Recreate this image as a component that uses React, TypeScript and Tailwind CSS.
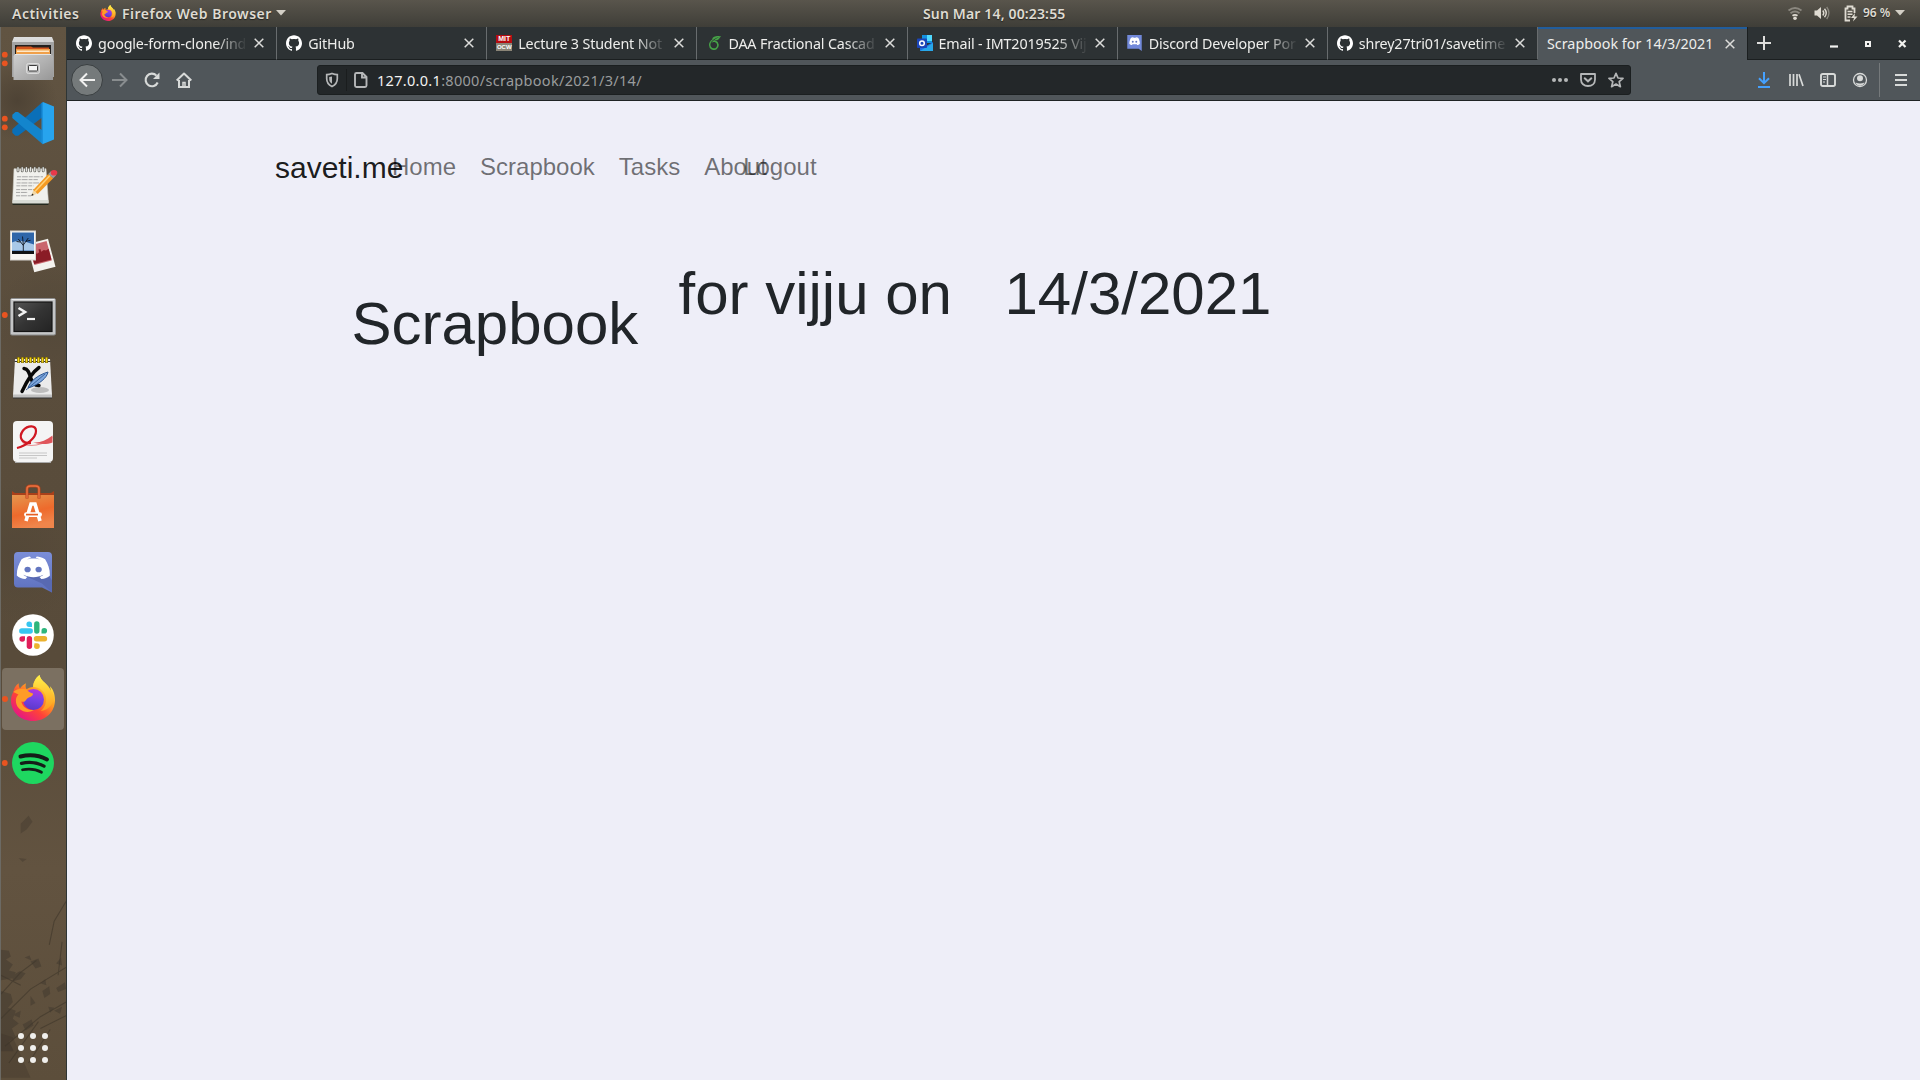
import React, { ReactNode } from "react";
import { SiGithub, SiOverleaf } from "react-icons/si";

const DiscordFace = () => (
  <>
    <path
      fill="#fff"
      d="M19.5 31c0-6 1.500-10.500 4-15 2.500-1.800 5-2.400 7-2.500l.8 1.200c-2 .5-3.600 1.200-5 2.100 4.500-1.900 9.500-1.900 14 0-1.400-.9-3-1.600-5-2.100l.8-1.200c2 .1 4.500.7 7 2.500 2.500 4.500 4 9 4 15-1.800 2.300-4.400 3.100-7.200 3.200l-1.500-1.900c1.300-.4 2.500-1 3.300-2-5.100 3-11.500 3-16.800 0 .8 1 2 1.600 3.300 2l-1.500 1.900c-2.800-.1-5.400-.9-7.200-3.200z"
    />
    <circle cx="28.500" cy="25.500" r="2.600" fill="#6376c0" />
    <circle cx="37.700" cy="25.500" r="2.600" fill="#6376c0" />
  </>
);

/* Launcher and panel share the same Firefox drawing, on a 44 unit canvas. */
const Firefox = ({ id, className }: { id: string; className?: string }) => (
  <svg viewBox="0 0 44 46" className={className}>
    <defs>
      <linearGradient id={id + "a"} x1=".85" y1=".1" x2=".2" y2=".95">
        <stop offset="0" stopColor="#fff44f" />
        <stop offset=".35" stopColor="#ffa020" />
        <stop offset=".65" stopColor="#ff4338" />
        <stop offset="1" stopColor="#e31587" />
      </linearGradient>
      <linearGradient id={id + "b"} x1=".6" y1="0" x2=".4" y2="1">
        <stop offset="0" stopColor="#b833e1" />
        <stop offset=".5" stopColor="#7542e5" />
        <stop offset="1" stopColor="#5b38c9" />
      </linearGradient>
      <linearGradient id={id + "c"} x1="0" y1="0" x2="0" y2="1">
        <stop offset="0" stopColor="#fff14b" />
        <stop offset="1" stopColor="#ff9a1c" />
      </linearGradient>
    </defs>
    <path
      fill={`url(#${id}a)`}
      d="M28.500 0c-4 3-6.500 8-6.300 12-3 .2-5 1-6.700 2.200-1-1.500-1.200-3.600-.5-6-3 1.400-5 3.500-6 5.300-1-1-1.500-3-1.200-5.200C4.500 10.500 2.600 14 2.300 17 .8 19.500 0 22.500 0 25.500 0 37 9.500 46 22 46s22-9 22-21c0-6-2-11-5-13.800.4 1.500.6 2.800.5 4.500C37.500 8.500 30 7 28.500 0z"
    />
    <path
      fill={`url(#${id}c)`}
      d="M28.500 0c-4 3-6.500 8-6.300 12 6 0 11 4 12.500 9 1.500 6-1 12-5 15 8-1 13-7 13-14 0-3-1.200-5-3.200-6.300C37.500 8.500 30 7 28.500 0z"
    />
    <circle cx="22.500" cy="24.500" r="10.500" fill={`url(#${id}b)`} />
    <path
      fill="#ff9c27"
      d="M2.300 17c3-3.200 8-4 13.200-2.800 1.300 2.200 3.200 3.300 6.500 4.300.5 1.500-1.500 3-4.200 4-2 .8-2.600 2.700-3.800 3.800-1.200.8-2.400.6-3.700.2 1.700 6 6.500 9 12.700 8.500-8 5-17-.5-18-7.500-.5-4 .5-6 2.500-8z"
    />
  </svg>
);

const Cell = ({ children }: { children: ReactNode }) => (
  <svg viewBox="0 0 66 64" className="h-16 w-full shrink-0">
    {children}
  </svg>
);

const Dot = ({ y = 32 }: { y?: number }) => <circle cx="4.800" cy={y} r="2.900" fill="#e95420" />;

const Files = () => (
  <Cell>
    <defs>
      <linearGradient id="cab" x1="0" y1="0" x2="1" y2="1">
        <stop offset="0" stopColor="#cfcfcf" />
        <stop offset="1" stopColor="#979797" />
      </linearGradient>
      <linearGradient id="cabTop" x1="0" y1="0" x2="0" y2="1">
        <stop offset="0" stopColor="#dedede" />
        <stop offset="1" stopColor="#a6a6a6" />
      </linearGradient>
    </defs>
    <Dot y={27.700} />
    <Dot y={36.300} />
    <path d="M14 10h38l2 5v35H12V15z" fill="url(#cabTop)" />
    <path d="M12 15h42v35H12z" fill="#a3a3a3" />
    <path d="M15 18h36v11H15z" fill="#23201e" />
    <path d="M17 19.500h14l2 1h16V28H16v-7z" fill="#d2541d" />
    <path d="M16 22h34v6H16z" fill="#f0a04a" />
    <path d="M17 23.500h32v1.500H17z" fill="#fde8c8" />
    <path d="M15 27h36l2 2v24H13.500V29z" fill="url(#cab)" />
    <path d="M15 27.500h36" stroke="#e4e4e4" />
    <rect x="26.500" y="36.500" width="13" height="10" rx="2" fill="#bdbdbd" stroke="#dcdcdc" />
    <rect x="28.500" y="38.500" width="9" height="5.500" rx=".8" fill="#f5f5f5" stroke="#3c3c3c" />
  </Cell>
);

const Code = () => (
  <Cell>
    <Dot y={27.700} />
    <Dot y={36.300} />
    <path d="M42.500 11 12.300 38.300v3.400l3.200 3 2.600.1 25.400-19.400z" fill="#0a6fb8" />
    <path d="M15.500 21l-3.200 2.700v3.200L43 53.500V40L18 21z" fill="#1385cd" />
    <path d="M43 11l11 4.500v33L43 53z" fill="#27a4ee" />
    <path d="M43 11v42l-1.500-1.300V12.300z" fill="#1a8fdb" />
  </Cell>
);

const Notes = () => (
  <Cell>
    <g transform="translate(0 -1.500) scale(1 .95)">
      <path d="M14 16h32l2.500 36H12.500z" fill="#f1f1ed" stroke="#c9c9c3" strokeWidth=".6" />
      <path d="M12.700 49h35.600v4.300H12.700z" fill="#d9dcd6" />
      <path d="M12.500 53.500h36" stroke="#24291f" strokeWidth="1.500" />
      <g stroke="#9d9d9d" strokeWidth=".9" strokeDasharray="4 .8 6 1">
        <path d="M17 24.500h26M16.800 27.500h21M16.600 31h25M16.400 34h17M16.200 38h22M16 41h12M16 44.500h15" />
      </g>
      <g stroke="#55554f" strokeWidth="2.700" strokeLinecap="round">
        <path d="M18 15v3.500M22.200 15v3.500M26.400 15v3.500M30.600 15v3.500M34.800 15v3.500M39 15v3.500M43.200 15v3.500" />
      </g>
      <g stroke="#e6e6e2" strokeWidth="1.400" strokeLinecap="round">
        <path d="M18 15v3.500M22.200 15v3.500M26.400 15v3.500M30.600 15v3.500M34.800 15v3.500M39 15v3.500M43.200 15v3.500" />
      </g>
    </g>
    <g transform="translate(0 -7.500)">
      <path d="M31.300 48.500l2-6 3.700 3.700z" fill="#f1d7a4" />
      <path d="M31.300 48.500l.8-2.600 1.700 1.600z" fill="#222" />
      <path d="M33.200 42.500l15-16 5 4.200-15.500 15.800z" fill="#f59a22" />
      <path d="M35 44l15-16" stroke="#ffd27a" strokeWidth="1.500" />
      <path d="M48.200 26.500l3-3 5 4.200-3 3z" fill="#9c9c9c" />
      <ellipse cx="54" cy="25.300" rx="3.300" ry="2.800" fill="#e8394a" />
    </g>
  </Cell>
);

const Photos = () => (
  <Cell>
    <g transform="rotate(-15 41 36)">
      <rect x="30" y="22" width="22" height="29" fill="#f4f2ee" />
      <rect x="32" y="24" width="18" height="20" fill="#c9666d" />
      <path d="M32 37l3-2v-3h2v2l3-1v-3h2v3l3-1 2 1 3-1v11H32z" fill="#8a1c26" />
    </g>
    <g transform="translate(0 3.500)">
      <rect x="10.500" y="8.500" width="25" height="29" fill="#f7f6f2" stroke="#d6d4cf" />
      <rect x="12" y="10" width="22" height="21.500" fill="#2f66a9" />
      <path d="M12 20c8-4 14 0 22 2v6H12z" fill="#a9c9e8" />
      <path d="M12 28.500h22v3H12z" fill="#101214" />
      <path d="M23.300 29v-6.500M23.300 23l-5-6.500M23.300 22.500l5-7M20.500 19.500l-4-.5M26 18.800l4.500-1M23.300 22l-.8-8" stroke="#0e1520" strokeWidth=".9" fill="none" />
    </g>
  </Cell>
);

const Terminal = () => (
  <Cell>
    <defs>
      <linearGradient id="term" x1="0" y1="0" x2="1" y2="1">
        <stop offset="0" stopColor="#555" />
        <stop offset=".5" stopColor="#343434" />
        <stop offset="1" stopColor="#232323" />
      </linearGradient>
    </defs>
    <Dot />
    <rect x="10.500" y="15.500" width="45" height="36.500" rx="1.500" fill="#c4c5c6" stroke="#8b8c8d" />
    <path d="M11.500 16.500h43" stroke="#ececec" />
    <rect x="14" y="19" width="38" height="29.500" fill="url(#term)" stroke="#151515" strokeWidth="1.200" />
    <path d="M18.500 25l6.500 4-6.500 4" stroke="#f2f2f2" strokeWidth="2.600" fill="none" />
    <path d="M27 36h8" stroke="#f2f2f2" strokeWidth="2.200" />
  </Cell>
);

const Xournal = () => (
  <Cell>
    <path d="M15 12h35l2 36.500H13z" fill="#ebebeb" />
    <path d="M13 47.500h39v3.500H13z" fill="#c0c0c0" />
    <path d="M13 51h39" stroke="#333" />
    <ellipse cx="40" cy="43" rx="9" ry="3" fill="#bdbdbd" />
    <path d="M14.500 14.500h36" stroke="#333" strokeWidth="1.200" />
    <g stroke="#6f5d00" strokeWidth="2.800"><path d="M18.500 10v6M22.500 10v6M26.500 10v6M30.500 10v6M34.500 10v6M38.500 10v6M42.500 10v6M46.500 10v6" /></g>
    <g stroke="#f3d51b" strokeWidth="1.600"><path d="M18.500 10.500v5M22.500 10.500v5M26.500 10.500v5M30.500 10.500v5M34.500 10.500v5M38.500 10.500v5M42.500 10.500v5M46.500 10.500v5" /></g>
    <path d="M24 21.500c4 .5 5 4 7 10 1.500 4.500 3 7 8 7M39 20.500c-7 5-12 13-17 24" stroke="#080808" strokeWidth="3.400" fill="none" strokeLinecap="round" />
    <path d="M28 41c2-7 10-13 20-16-1 6-9 12-17 15z" fill="#7ea7dc" stroke="#2d5793" />
    <path d="M26 43l19-16" stroke="#315b97" strokeWidth=".9" />
  </Cell>
);

const Pdf = () => (
  <Cell>
    <g transform="translate(0 -1.500)">
      <rect x="13" y="11.500" width="40" height="41" rx="4" fill="#f4f4f4" />
      <path d="M15 53h36" stroke="#a9a9a9" />
      <path d="M17 38.500c9-2 19-10 19-17 0-6-8-6-13-.5-5 7-1 15 8 15 8 0 15-3 21.500-8" fill="none" stroke="#e88d90" strokeWidth="1.200" />
      <path d="M31 32.500c7 2 14-1 21.500-6.500v7c-8 3-15 1-21.500-.500z" fill="#e0565b" />
      <path d="M17 38.500c9-2 19-10 19-17 0-6-8-6-13-.5-5 7-1 13 8 12.500" fill="none" stroke="#d01822" strokeWidth="2.200" />
      <path d="M19 43.500h28M19 46h28M19 48.500h18" stroke="#c6c6c6" />
    </g>
  </Cell>
);

const Software = () => (
  <Cell>
    <defs>
      <linearGradient id="bag" x1="0" y1="0" x2=".3" y2="1">
        <stop offset="0" stopColor="#e4974f" />
        <stop offset=".6" stopColor="#ee6a2c" />
        <stop offset="1" stopColor="#f0854b" />
      </linearGradient>
    </defs>
    <g transform="translate(0 2)">
      <path d="M12 14l3 2h36l3-2v8H12z" fill="#a9401a" />
      <path d="M12 18h42v33H12z" fill="url(#bag)" />
      <path d="M27 21.500V12c0-2.500 1.500-3 3.500-3h5c2 0 3.500.5 3.500 3v9.500" fill="none" stroke="#b8441a" strokeWidth="3" />
      <path d="M27 21V12c0-2.500 1.500-3 3.500-3h5c2 0 3.500.5 3.500 3v9" fill="none" stroke="#ea7242" strokeWidth="1.500" />
      <path d="M26 44l5-17h4l5 17" fill="none" stroke="#fff" strokeWidth="3.600" />
      <rect x="24" y="35.300" width="18" height="4.600" rx="2.300" fill="#fff" />
      <path d="M26 37.600h12" stroke="#e65f24" strokeWidth="1.700" />
    </g>
  </Cell>
);

const Discord = () => (
  <Cell>
    <defs>
      <linearGradient id="disc" x1="0" y1="0" x2="0" y2="1">
        <stop offset="0" stopColor="#7b8ed8" />
        <stop offset="1" stopColor="#5d70be" />
      </linearGradient>
    </defs>
    <g transform="translate(0 3.500)">
      <path d="M18 9.500h30a4 4 0 0 1 4 4V50l-10-5H18a4 4 0 0 1-4-4V13.500a4 4 0 0 1 4-4z" fill="url(#disc)" />
      <path d="M48 32l4 6v12l-10-9-20-9z" fill="#5869b2" />
      <g transform="translate(-6.600 -.5) scale(1.200 1.080)"><DiscordFace /></g>
    </g>
  </Cell>
);

const Slack = () => (
  <Cell>
    <circle cx="33" cy="32" r="20.800" fill="#fff" />
    <g transform="translate(0 -.5)">
      <g strokeWidth="5.400" strokeLinecap="round">
        <path d="M21.800 28.500h8.400" stroke="#36c5f0" />
        <path d="M36.800 21.500v7" stroke="#2eb67d" />
        <path d="M36.500 36.300h8" stroke="#ecb22e" />
        <path d="M29.400 36.200v7.600" stroke="#e01e5a" />
      </g>
      <path d="M32 24.500h-2.700a2.800 2.800 0 1 1 2.700-2.800z" fill="#36c5f0" />
      <path d="M41.500 31v-2.600a2.800 2.800 0 1 1 2.700 2.600z" fill="#2eb67d" />
      <path d="M34.500 40.700h2.300a2.900 2.900 0 1 1-2.800 3z" fill="#ecb22e" />
      <path d="M25 33.700v2.600a2.800 2.800 0 1 1-2.700-2.600z" fill="#e01e5a" />
    </g>
  </Cell>
);

const Spotify = () => (
  <Cell>
    <Dot />
    <circle cx="33" cy="32" r="21" fill="#1ed760" />
    <g stroke="#151c18" fill="none" strokeLinecap="round">
      <path d="M20.500 25.500c9-2.200 18.500-1.300 26.500 2.900" strokeWidth="4" />
      <path d="M21.500 32.300c8-1.800 15.500-1 22.500 2.800" strokeWidth="3.300" />
      <path d="M22.500 38.800c6.500-1.300 13-.8 19 2.500" strokeWidth="2.700" />
    </g>
  </Cell>
);

const Foliage = () => (
  <svg viewBox="0 0 66 300" className="absolute bottom-0 left-0 h-[300px] w-full blur-[0.7px]">
    <g fill="none" stroke="#3d3529" strokeWidth="1.100" opacity=".6">
      <path d="M0 215l20-22 16-12M0 240l30-30 36-22M4 268l36-30 28-16M0 196l20 10M8 285l30-42M40 250l26-13M49 165l5-24 12-20M58 196l4-34M28 285l22-34" />
    </g>
    <g fill="#3f382d" opacity=".5">
      <path d="M0 170l8 1 2 6-5 3 7 5-4 6 7 2-3 6-12 2zM12 196l7-4 6 2-5 6-8 2zM30 182l8-3 3 8-6 2zM24 178l5-2 2 5zM0 212l10 3 2 8-5 6 8 3-3 8 6 5-7 5 4 9-7 4 5 10H0zM42 212l7-5 1 8-6 4zM30 217l5 7-5 3zM56 209l9-6 1 7-8 3zM22 246l9-5 2 6-8 5zM54 232l8-4-2 7zM56 184l5-6 1 8zM48 228l6 1-4 5zM40 204l5-4 1 6zM12 236l8-4-1 7z" />
    </g>
    <path d="M0 255l12 4 8 18 10 23H0z" fill="#3a3328" opacity=".3" />
    <path d="M20 42l8-8 4 6-6 8-6 4zM18 77l8 1-4 3z" fill="#463c2f" opacity=".5" />
  </svg>
);

const Dock = () => (
  <aside className="relative flex w-[67px] shrink-0 flex-col border-r border-l border-r-[#2e3535] border-l-[#6c6a64] bg-[#5d503f] bg-[radial-gradient(circle_at_25%_7%,#4e4335_0,transparent_40px),radial-gradient(circle_at_80%_28%,#54493a_0,transparent_60px),radial-gradient(circle_at_20%_50%,#544838_0,transparent_70px),linear-gradient(to_bottom,#615442,#5a4d3c_30%,#584b3a_60%,#625340_80%,#5c4e3b)]">
    <Foliage />
    <div className="relative -ml-px flex w-[66px] flex-1 flex-col">
      <Files />
      <Code />
      <Notes />
      <Photos />
      <Terminal />
      <Xournal />
      <Pdf />
      <Software />
      <Discord />
      <Slack />
      <div className="relative flex h-16 shrink-0 items-center">
        <div className="absolute top-px left-0.5 h-[62px] w-[62px] rounded-[4px] bg-[#7b7061]" />
        <span className="absolute left-0.5 h-1.5 w-1.5 rounded-full bg-[#e95420]" />
        <Firefox id="dock" className="relative -top-px ml-[11px] h-[46px] w-[44px]" />
      </div>
      <Spotify />
      <div className="mt-auto mb-[17px] ml-[18px] grid w-[30px] grid-cols-3 gap-1.5">
        {Array.from({ length: 9 }, (_, i) => (
          <span key={i} className="h-1.5 w-1.5 rounded-full bg-[#f0efec]" />
        ))}
      </div>
    </div>
  </aside>
);

const Caret = () => (
  <svg viewBox="0 0 10 6" className="h-[6px] w-[10px] shrink-0"><path d="M0 0h10L5 5.500z" fill="#d3cfc6" /></svg>
);

const Panel = () => (
  <header className="grid h-[27px] shrink-0 grid-cols-[1fr_auto_1fr] items-center bg-linear-to-b from-[#59554c] to-[#3f3e38] pb-px font-['Noto_Sans'] text-[14px] font-semibold text-[#dfdbd2] [text-shadow:0_1px_1px_rgba(0,0,0,.5)]">
    <div className="flex items-center pl-3">
      <span className="w-[88px] tracking-[0.500px]">Activities</span>
      <Firefox id="panel" className="h-4 w-4" />
      <span className="ml-1.5 w-[154px] tracking-[0.500px] whitespace-nowrap">Firefox Web Browser</span>
      <Caret />
    </div>
    <span className="w-[142px] translate-x-[34px] tracking-[0.150px] whitespace-nowrap">Sun Mar 14, 00:23:55</span>
    <div className="flex items-center justify-end pr-[15px]">
      <svg viewBox="0 0 16 16" className="h-4 w-4" fill="none" strokeWidth="1.800">
        <path d="M1.500 5.500q6.500-5 13 0M3.500 8.200q4.500-3.400 9 0" stroke="#8a877f" />
        <path d="M5.500 10.700q2.500-1.800 5 0" stroke="#dfdbd2" />
        <circle cx="8" cy="13.300" r="1.800" fill="#dfdbd2" />
      </svg>
      <svg viewBox="0 0 16 16" className="ml-[11px] h-4 w-4" fill="none">
        <path d="M.5 5.500H3L7 2v12l-4-3.500H.5z" fill="#dfdbd2" />
        <path d="M8.800 5.500q2 2.500 0 5M10.500 3.700q3.500 4.300 0 8.600" stroke="#dfdbd2" strokeWidth="1.400" />
        <path d="M12.700 2q4.500 6 0 12" stroke="#8a877f" strokeWidth="1.300" />
      </svg>
      <svg viewBox="0 0 16 17" className="ml-[13px] h-[17px] w-4" fill="none" stroke="#dfdbd2">
        <path d="M7 15.500H2.500V3.500h2v-2h5v2h2V8" strokeWidth="1.800" />
        <path d="M4.500 6.500h5M4.500 9.200h5M4.500 12h3" strokeWidth="1.400" />
        <path d="M12 8l-4 5h3l-1 3.500 4.500-5h-3z" fill="#dfdbd2" stroke="none" />
      </svg>
      <span className="ml-[4px] w-[32px] text-[12px] font-semibold whitespace-nowrap">96 %</span>
      <Caret />
    </div>
  </header>
);

const MitIcon = () => (
  <span className="flex h-4 w-4 flex-col text-center font-['Liberation_Sans'] text-[7px] leading-[8px] font-bold text-white">
    <span className="h-2 bg-[#b50d12]">MIT</span>
    <span className="h-2 bg-[#8a8476] text-[6px]">OCW</span>
  </span>
);

const OutlookIcon = () => (
  <svg viewBox="0 0 16 16" className="h-4 w-4">
    <path d="M5 0h10v8H5z" fill="#1490df" />
    <path d="M10 0h5v6h-5z" fill="#50d9ff" />
    <path d="M3 8l6 3 7-4v9H3z" fill="#1f6fe0" />
    <path d="M3 16l13-8v8z" fill="#28a8ea" />
    <rect y="3.500" width="10" height="9.500" rx=".8" fill="#1b45b8" />
    <circle cx="5" cy="8.200" r="2.300" fill="none" stroke="#fff" strokeWidth="1.500" />
  </svg>
);

const DiscordTab = () => (
  <svg viewBox="14 8 38 42" className="h-4 w-[15px]">
    <path d="M14 8h38v42l-8-6H14z" fill="#7289da" />
    <DiscordFace />
  </svg>
);

const Close = () => (
  <svg viewBox="0 0 10 10" className="h-2.5 w-2.5 shrink-0"><path d="M.7.7l8.600 8.600M9.300.7L.7 9.300" stroke="#dcdcda" strokeWidth="1.500" /></svg>
);

const Octocat = () => <SiGithub className="h-4 w-4 text-white" />;

const tabs: { icon: ReactNode; title: string }[] = [
  { icon: <Octocat />, title: "google-form-clone/ind" },
  { icon: <Octocat />, title: "GitHub" },
  { icon: <MitIcon />, title: "Lecture 3 Student Not" },
  { icon: <SiOverleaf className="ml-0.5 h-3.5 w-3.5 text-[#46a247]" />, title: "DAA Fractional Cascad" },
  { icon: <OutlookIcon />, title: "Email - IMT2019525 Vij" },
  { icon: <DiscordTab />, title: "Discord Developer Por" },
  { icon: <Octocat />, title: "shrey27tri01/savetime" },
];

const TabBar = () => (
  <div className="flex h-[33px] shrink-0 bg-[#2d3234] font-['Noto_Sans'] text-[14.300px] text-[#eeeeec]">
    {tabs.map((t) => (
      <div key={t.title} className="flex w-[210.125px] shrink-0 items-center border-r border-b border-r-[#686c6e] border-b-[#1b1f20] pr-3 pl-[9px]">
        <span className="flex w-[22px] shrink-0 items-center">{t.icon}</span>
        <span className="mr-[7px] flex-1 overflow-hidden pt-0.5 tracking-[-0.150px] whitespace-nowrap [mask-image:linear-gradient(to_right,black_calc(100%-32px),transparent)]">
          {t.title}
        </span>
        <Close />
      </div>
    ))}
    <div className="flex w-[209.500px] shrink-0 items-center justify-between border-t-2 border-t-[#215d9c] bg-[#50565a] pr-3 pb-0.5 pl-[9px]">
      <span className="tracking-[0.040px] whitespace-nowrap">Scrapbook for 14/3/2021</span>
      <Close />
    </div>
    <div className="flex flex-1 items-center border-b border-l border-[#1b1f20] pl-[9px]">
      <svg viewBox="0 0 14 14" className="h-3.5 w-3.5"><path d="M7 0v14M0 7h14" stroke="#dededc" strokeWidth="2" /></svg>
      <svg viewBox="0 0 78 12" className="mt-0.5 ml-[59px] h-3 w-[78px]">
        <path d="M0 8.500h8" stroke="#f2f2f0" strokeWidth="2.200" />
        <path d="M36 4h4v4h-4z" fill="none" stroke="#f2f2f0" strokeWidth="2" />
        <path d="M69 2.500l6.500 6.500M75.500 2.500L69 9" stroke="#f2f2f0" strokeWidth="2.200" />
      </svg>
    </div>
  </div>
);

const Tool = ({ children, className = "" }: { children: ReactNode; className?: string }) => (
  <svg viewBox="0 0 16 16" className={"h-4 w-4 shrink-0 " + className} fill="none" stroke="currentColor" strokeWidth="2">
    {children}
  </svg>
);

const Toolbar = () => (
  <div className="flex h-[41px] shrink-0 items-center border-b border-[#1f2324] bg-[#50565a] text-[#d8dad9]">
    <span className="ml-1 flex h-8 w-8 shrink-0 items-center justify-center rounded-full border border-[#3a3f41] bg-[#757a7b]">
      <Tool className="text-[#f0f0ef]"><path d="M16 8H1.500M8 1.500L1.500 8 8 14.500" /></Tool>
    </span>
    <Tool className="ml-[9px] text-[#898d8f]"><path d="M0 8h14.500M8 1.500L14.500 8 8 14.500" /></Tool>
    <Tool className="ml-4">
      <path d="M13.700 10.500A6.300 6.300 0 1 1 12.500 3.600" strokeWidth="2.100" />
      <path d="M15.500.5V7H9z" fill="currentColor" stroke="none" />
    </Tool>
    <Tool className="ml-4">
      <path d="M.7 8.500L8 1.500l7.300 7" strokeLinejoin="round" />
      <path d="M3 8v7h10V8" />
      <path d="M7 15v-4.500h2V15" strokeWidth="1.500" />
    </Tool>
    <div className="ml-[125px] flex h-[30px] w-[1314px] shrink-0 items-center rounded-[3px] border border-[#1b1f20] bg-[#232729] text-[#b5b7b8]">
      <Tool className="ml-[6px]">
        <path d="M8 1.500q3 1.200 5.300 1.200v4C13.300 10.500 11 13 8 14.500 5 13 2.700 10.500 2.700 6.700v-4Q5 2.700 8 1.500z" strokeWidth="1.700" />
        <path d="M8 4.500v7.300C6 10.500 5.200 9 5.200 7V5z" fill="currentColor" stroke="none" />
      </Tool>
      <span className="ml-[6px] h-[22px] w-px bg-[#1a1d1e]" />
      <Tool className="ml-[6px]">
        <path d="M3.500 1h6l4 4v8.500a1.500 1.500 0 0 1-1.500 1.500H3.500A1.500 1.500 0 0 1 2 13.500v-11A1.500 1.500 0 0 1 3.500 1zM9 1v4.500h4.500" strokeWidth="1.900" />
      </Tool>
      <span className="ml-[8px] flex-1 pt-0.5 font-['Noto_Sans'] text-[14.500px] tracking-[0.300px] text-[#9a9c9d]">
        <span className="text-[#f3f3f2]">127.0.0.1</span>:8000/scrapbook/2021/3/14/
      </span>
      <Tool><g fill="currentColor" stroke="none"><circle cx="2" cy="8" r="2" /><circle cx="8" cy="8" r="2" /><circle cx="14" cy="8" r="2" /></g></Tool>
      <Tool className="ml-3">
        <path d="M1 2h14v5.500c0 4-3 6.500-7 6.500s-7-2.500-7-6.500z" strokeWidth="1.800" strokeLinejoin="round" />
        <path d="M4.700 6.300L8 9.300l3.300-3" strokeLinecap="round" />
      </Tool>
      <Tool className="mr-[6px] ml-3">
        <path d="M8 1.300l2 4.700 5 .4-3.800 3.300 1.200 5L8 12l-4.400 2.700 1.200-5L1 6.400 6 6z" strokeWidth="1.700" strokeLinejoin="round" />
      </Tool>
    </div>
    <Tool className="ml-[125px] text-[#45a1ff]"><path d="M8 0v11M3 6.200l5 5 5-5M2 15h12" /></Tool>
    <Tool className="ml-4"><path d="M2 2v12M5.500 2v12M9 2v12M11 2.300L15 14" strokeWidth="1.700" /></Tool>
    <Tool className="ml-4">
      <rect x="1" y="2" width="14" height="12" rx="1.800" strokeWidth="1.900" />
      <path d="M7.500 2v12" strokeWidth="1.500" />
      <path d="M3 5h3M3 7.500h3M3 10h2" strokeWidth="1.100" />
    </Tool>
    <Tool className="ml-4">
      <circle cx="8" cy="8" r="6.500" strokeWidth="1.300" />
      <circle cx="8" cy="6.300" r="3" fill="currentColor" stroke="none" />
      <path d="M3.500 10.500q4.500 2 9 0-1.500 3.200-4.500 3.200t-4.500-3.200z" fill="currentColor" stroke="none" />
    </Tool>
    <span className="ml-[11px] h-[34px] w-px bg-[#75797b]" />
    <svg viewBox="0 0 12 12" className="ml-[15px] h-3 w-3"><path d="M0 1h12M0 6h12M0 11h12" stroke="currentColor" strokeWidth="2" /></svg>
  </div>
);

const Page = () => (
  <main className="flex-1 bg-[#eeeef8] font-['Liberation_Sans'] text-[#212529]">
    <nav className="flex h-[93px] pt-[43px] pl-[208px] text-[24px] leading-[48px] whitespace-nowrap text-black/55">
      <span className="w-[117px] text-[30px] text-black/90">saveti.me</span>
      <span className="-mt-px mr-6">Home</span>
      <span className="-mt-px mr-6">Scrapbook</span>
      <span className="-mt-px mr-6">Tasks</span>
      <span className="-mt-px w-[39px]">About</span>
      <span className="-mt-px">Logout</span>
    </nav>
    <div className="flex pt-[64px] pl-[284.500px] text-[60px] leading-[72px] whitespace-nowrap">
      <h1 className="mt-[30px] w-[327px]">Scrapbook</h1>
      <h1 className="w-[326px]">for vijju on</h1>
      <h1>14/3/2021</h1>
    </div>
  </main>
);

export default function App() {
  return (
    <div className="flex h-screen w-screen flex-col overflow-hidden">
      <Panel />
      <div className="flex min-h-0 flex-1">
        <Dock />
        <div className="flex min-w-0 flex-1 flex-col">
          <TabBar />
          <Toolbar />
          <Page />
        </div>
      </div>
    </div>
  );
}
